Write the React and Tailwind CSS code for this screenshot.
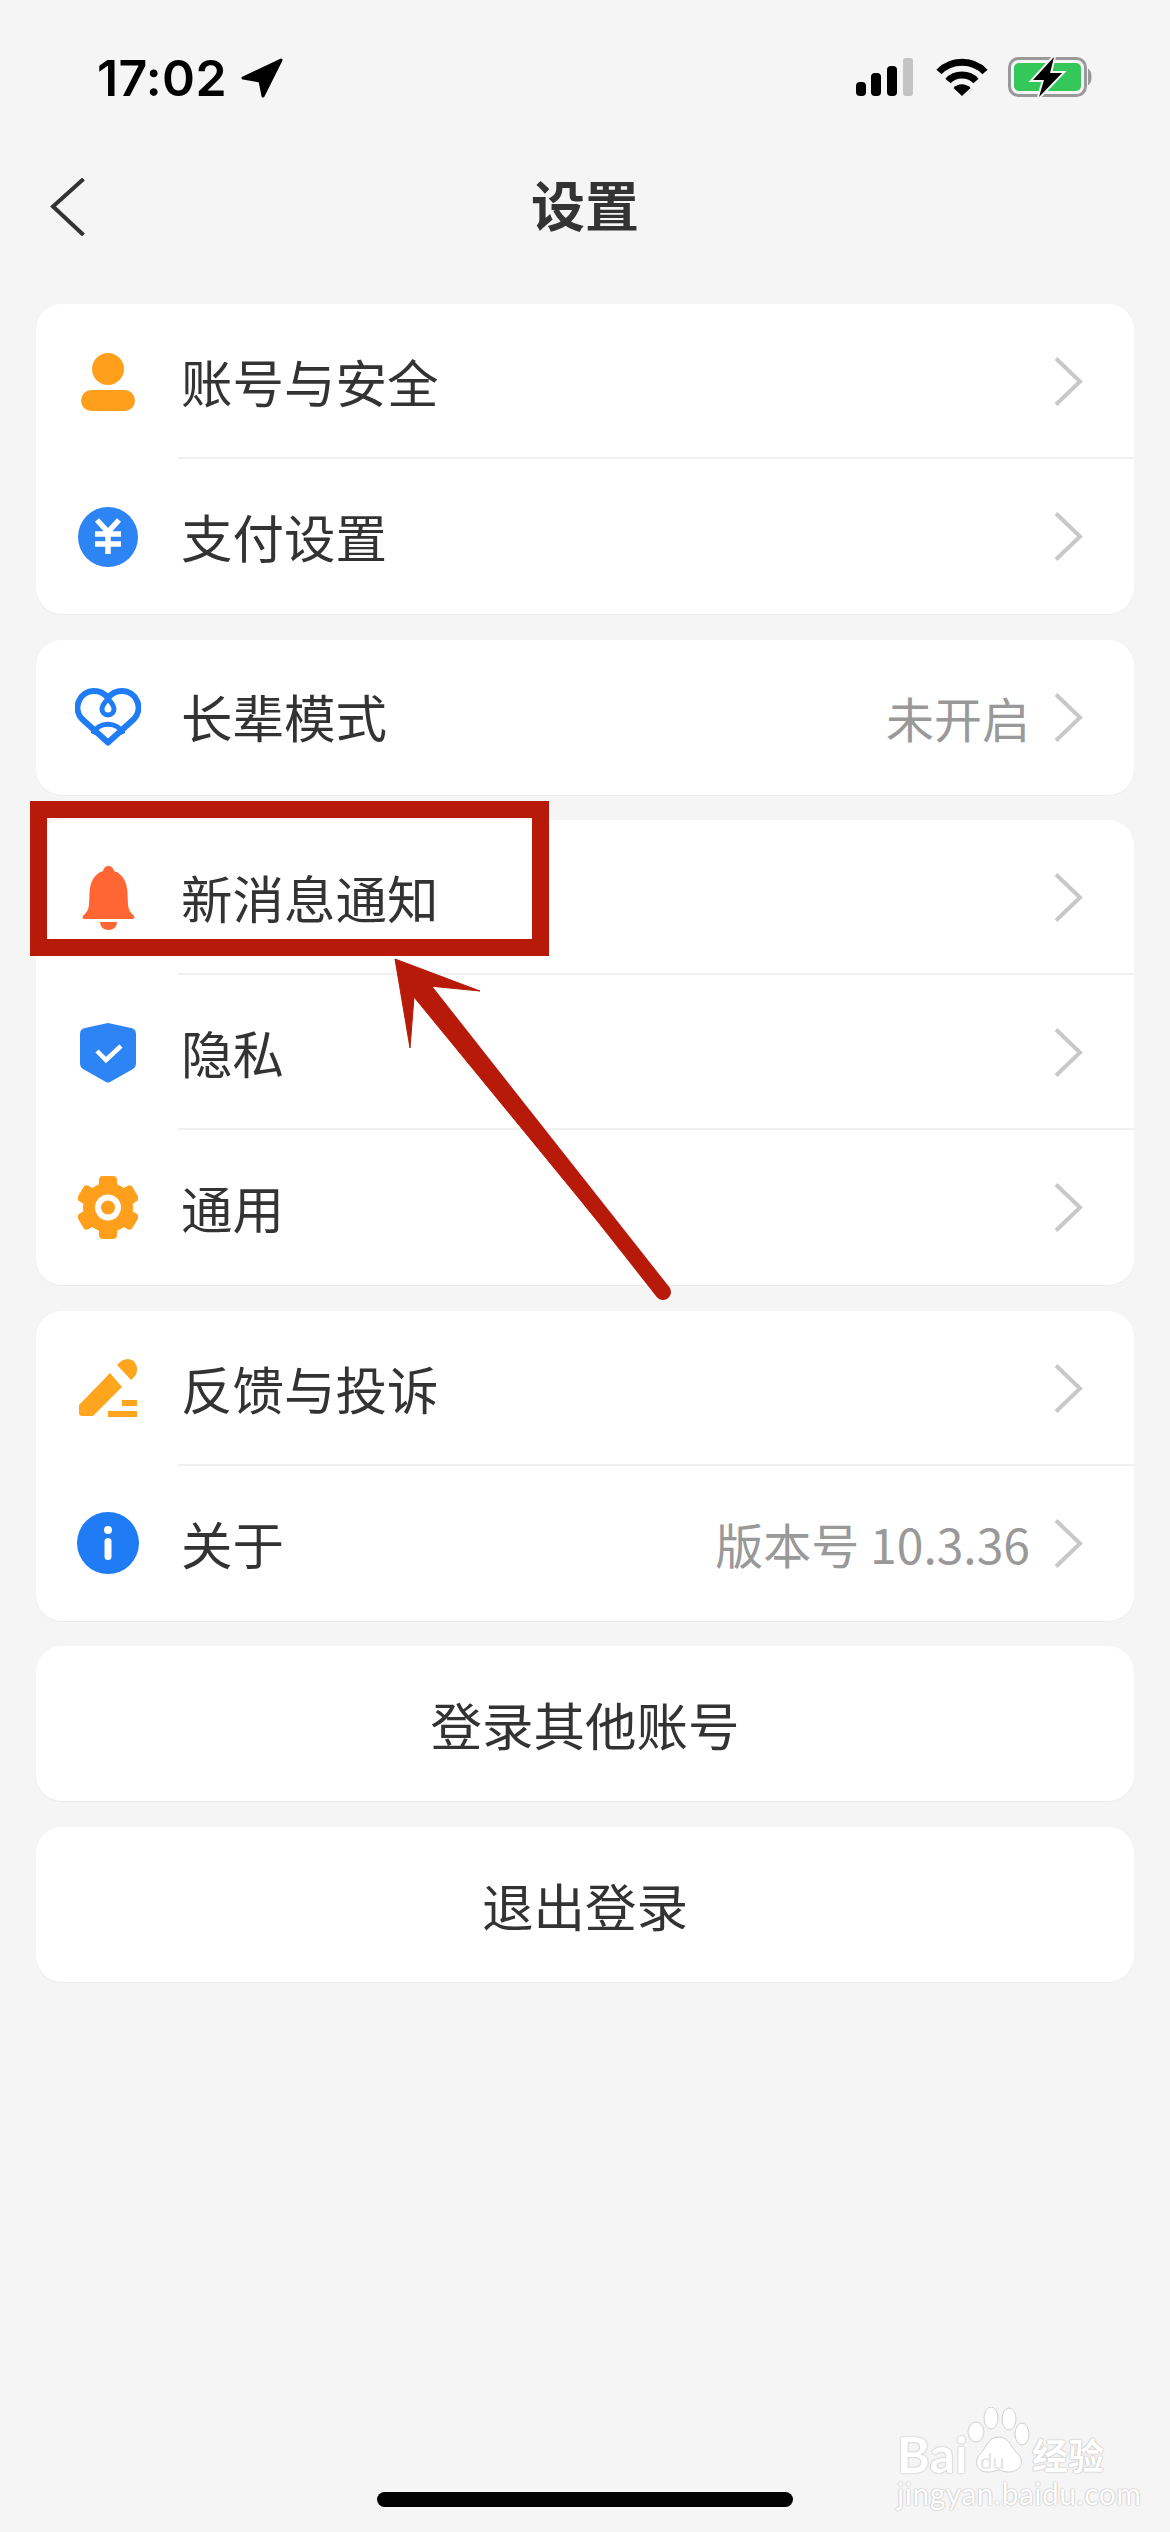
import React from 'react';

const CJK = '[font-family:"Noto_Sans_CJK_SC","Noto_Sans",sans-serif]';

const PersonIcon = () => (
    <svg width="54" height="58" viewBox="0 0 54 58">
        <circle cx="27" cy="16" r="16" fill="#ff9f1c" />
        <rect x="0" y="37" width="54" height="21" rx="10.5" fill="#ff9f1c" />
    </svg>
);

const YenIcon = () => (
    <svg width="60" height="60" viewBox="0 0 60 60">
        <circle cx="30" cy="30" r="30" fill="#2d84f5" />
        <path d="M19 13 L30 25 L41 13 M30 25 V47 M17 27 H43 M17 37 H43" fill="none" stroke="#fff" strokeWidth="5.5" />
    </svg>
);

const HeartIcon = () => (
    <svg width="66" height="58" viewBox="0 0 66 58">
        <path d="M33 54.500 L7 31 C-3 20 5 3 19 3 C25 3 30 6 33 10 C36 6 41 3 47 3 C61 3 69 20 59 31 Z" fill="none" stroke="#1f7cf5" strokeWidth="6" strokeLinejoin="round" />
        <path d="M33 11 C36 14 39 17 39 21 A6 6 0 0 1 27 21 C27 17 30 14 33 11 Z" fill="none" stroke="#1f7cf5" strokeWidth="5" />
        <path d="M18 46 C23 33 43 33 48 46" fill="none" stroke="#1f7cf5" strokeWidth="5" />
    </svg>
);

const BellIcon = () => (
    <svg width="53" height="64" viewBox="0 0 53 64">
        <path d="M26.5 0 C29.5 0 31.5 2 32 5 C41 8 45 16 45.500 27 L46 39 C46.500 44 49 47 51 49 C53 50.500 53 53 50 53 H3 C0 53 0 50.500 2 49 C4 47 6.500 44 7 39 L7.500 27 C8 16 12 8 21 5 C21.500 2 23.500 0 26.500 0 Z" fill="#ff6633" />
        <path d="M18 56 H35 C35 61 31 64 26.500 64 C22 64 18 61 18 56 Z" fill="#ff6633" />
    </svg>
);

const ShieldIcon = () => (
    <svg width="56" height="60" viewBox="0 0 56 60">
        <path d="M28 0 L51 5 Q56 6 56 11 V40 Q56 44 53 46 L30 59 Q28 60 26 59 L3 46 Q0 44 0 40 V11 Q0 6 5 5 Z" fill="#2d84f5" />
        <path d="M17 28 L26 37 L41 23" fill="none" stroke="#fff" strokeWidth="4.5" />
    </svg>
);

const GearIcon = () => (
    <svg width="60" height="63" viewBox="0 0 60 63">
        <g fill="#ff9f1c">
            <circle cx="30" cy="31.500" r="25" />
            {[0, 60, 120, 180, 240, 300].map(a => (
                <rect key={a} x="21" y="0" width="18" height="14" rx="4" transform={`rotate(${a} 30 31.500)`} />
            ))}
        </g>
        <circle cx="30" cy="31.500" r="10" fill="none" stroke="#fff" strokeWidth="6" />
    </svg>
);

const PenIcon = () => (
    <svg width="58" height="58" viewBox="0 0 58 58">
        <path d="M0 46 L31 14 L43 28 L14 57 L3 57 Q0 57 0 54 Z" fill="#ffa61e" />
        <path d="M38 6 Q43 0 49 0 Q58 1 58 11 Q58 16 52 21 Z" fill="#ffa61e" />
        <rect x="43" y="41" width="15" height="6" fill="#ffa61e" />
        <rect x="29" y="52" width="29" height="6" fill="#ffa61e" />
    </svg>
);

const InfoIcon = () => (
    <svg width="62" height="62" viewBox="0 0 62 62">
        <circle cx="31" cy="31" r="31" fill="#1f7cf5" />
        <circle cx="31" cy="18" r="4" fill="#fff" />
        <rect x="27.500" y="26" width="7" height="22" rx="3.500" fill="#fff" />
    </svg>
);

const Chevron = () => (
    <svg width="29" height="49" viewBox="0 0 29 49" className="shrink-0">
        <path d="M2 1.500 L26 24.500 L2 47.500" fill="none" stroke="#c8c8c8" strokeWidth="4" />
    </svg>
);

const Row = ({ icon, label, value, divider }) => (
    <div className="relative flex h-[155px] items-center pl-[36px] pr-[51px]">
        <div className="flex w-[72px] shrink-0 items-center justify-center">{icon}</div>
        <span className="ml-[37px] pb-[2px] text-[51.500px] leading-none text-[#333]">{label}</span>
        <div className="ml-auto flex items-center">
            {value && <span className="mr-[24px] text-[48px] leading-none text-[#999]">{value}</span>}
            <Chevron />
        </div>
        {divider && <div className="absolute bottom-0 left-[142px] right-0 h-[2px] bg-[#f0f0f0]" />}
    </div>
);

const Card = ({ children }) => (
    <div className="overflow-hidden rounded-[26px] bg-white shadow-[0_1px_1px_#ececec]">{children}</div>
);

const Button = ({ label }) => (
    <div className="flex h-[155px] items-center justify-center rounded-[26px] bg-white text-[51.500px] leading-none text-[#333] shadow-[0_1px_1px_#ececec]">
        {label}
    </div>
);

const StatusBar = () => (
    <div className="flex h-[150px] items-start justify-between pl-[97px] pr-[78px] pt-[58px]">
        <div className="flex items-center">
            <span className="text-[50px] font-semibold leading-[40px] tracking-[0.300px] text-black [font-family:Inter,sans-serif]">17:02</span>
            <svg width="42" height="40" viewBox="0 0 42 40" className="ml-[14px]">
                <path d="M40 2 L2 20 L19 23 L22 38 Z" fill="#000" stroke="#000" strokeWidth="3" strokeLinejoin="round" />
            </svg>
        </div>
        <div className="flex items-start">
            <svg width="57" height="38" viewBox="0 0 57 38">
                <rect x="0" y="24" width="10" height="14" rx="4" fill="#000" />
                <rect x="15" y="15" width="10" height="23" rx="4" fill="#000" />
                <rect x="31" y="8" width="10" height="30" rx="4" fill="#000" />
                <rect x="47" y="0" width="10" height="38" rx="3" fill="#c4c4c4" />
            </svg>
            <svg width="52" height="38" viewBox="0 0 52 38" className="ml-[23px]">
                <path d="M3 14 C15 1 37 1 49 14" fill="none" stroke="#000" strokeWidth="7" />
                <path d="M12 23 C19 15 33 15 40 23" fill="none" stroke="#000" strokeWidth="7" />
                <path d="M26 38 L17.500 30 C22 25 30 25 34.500 30 Z" fill="#000" />
            </svg>
            <svg width="84" height="40" viewBox="0 0 84 40" className="ml-[20px] -mt-px">
                <rect x="1.500" y="1.500" width="76" height="37" rx="9" fill="none" stroke="#999" strokeWidth="3" />
                <rect x="6" y="6" width="67" height="28" rx="5" fill="#34c759" />
                <path d="M81 14 C83 16 83 24 81 26 Z" fill="#999" stroke="#999" strokeWidth="2" />
                <path d="M46 0 L25 23 H36 L31 40 L54 16 H42 Z" fill="#000" stroke="#f5f5f5" strokeWidth="4" strokeLinejoin="miter" paintOrder="stroke" />
            </svg>
        </div>
    </div>
);

const Watermark = () => (
    <div className="absolute left-[897px] top-[2407px] h-[100px] w-[212px] text-white [text-shadow:0_0_2px_#b8b8b8,0_0_1px_#b8b8b8]">
        <span className="absolute left-0 top-[27px] text-[50px] font-bold leading-[40px] [font-family:Lato,sans-serif]">Bai</span>
        <svg width="64" height="66" viewBox="0 0 64 66" className="absolute left-[70px] top-0">
            <g fill="#fff" stroke="#d0d0d0" strokeWidth="1">
                <ellipse cx="9" cy="25" rx="8" ry="10" />
                <ellipse cx="24" cy="11" rx="7" ry="11" />
                <ellipse cx="42" cy="12" rx="7" ry="11" />
                <ellipse cx="55" cy="27" rx="7" ry="11" />
                <path d="M32 30 C43 30 44 42 52 48 C58 56 52 65 42 65 C36 65 34 63 32 63 C29 63 27 65 21 65 C10 65 6 56 13 47 C20 41 20 30 32 30 Z" />
            </g>
        </svg>
        <span className="absolute left-[83px] top-[43px] text-[22px] leading-none text-[#e4e4e4] [font-family:Lato,sans-serif] [text-shadow:none]">du</span>
        <span className={`absolute left-[135px] top-[27px] text-[36px] font-bold leading-[40px] ${CJK}`}>经验</span>
        <span className="absolute left-0 top-[71px] text-[30px] leading-[30px] tracking-[0.500px] [font-family:Lato,sans-serif]">jingyan.baidu.com</span>
    </div>
);

// red note drawn over the screenshot
const Annotation = () => (
    <>
        <div className="absolute left-[30px] top-[801px] h-[155px] w-[519px] border-[17px] border-[#b81a0a]" />
        <svg width="1170" height="400" viewBox="0 900 1170 400" className="absolute left-0 top-[900px]">
            <path d="M395 959 L480 991 L429 986 L667 1288 L659 1296 L414 997 L410 1048 Z" fill="#b81a0a" stroke="#b81a0a" strokeWidth="1" />
            <path d="M425 990 L663 1292" stroke="#b81a0a" strokeWidth="16" strokeLinecap="round" />
        </svg>
    </>
);

export default function App() {
    return (
        <div className={`relative flex min-h-[2532px] w-[1170px] flex-col overflow-hidden bg-[#f5f5f5] ${CJK}`}>
            <StatusBar />

            <div className="relative mb-[40px] flex h-[114px] items-center justify-center">
                <svg width="36" height="58" viewBox="0 0 36 58" className="absolute left-[50px] top-[28px]">
                    <path d="M33.500 1 L3 28.500 L33.500 57" fill="none" stroke="#333" strokeWidth="4" />
                </svg>
                <span className="pb-[6px] text-[54px] font-bold leading-none text-[#333]">设置</span>
            </div>

            <div className="flex flex-col gap-[25.600px] px-[36px]">
                <Card>
                    <Row icon={<PersonIcon />} label="账号与安全" divider />
                    <Row icon={<YenIcon />} label="支付设置" />
                </Card>
                <Card>
                    <Row icon={<HeartIcon />} label="长辈模式" value="未开启" />
                </Card>
                <Card>
                    <Row icon={<BellIcon />} label="新消息通知" divider />
                    <Row icon={<ShieldIcon />} label="隐私" divider />
                    <Row icon={<GearIcon />} label="通用" />
                </Card>
                <Card>
                    <Row icon={<PenIcon />} label="反馈与投诉" divider />
                    <Row icon={<InfoIcon />} label="关于" value="版本号 10.3.36" />
                </Card>
                <Button label="登录其他账号" />
                <Button label="退出登录" />
            </div>

            <div className="mt-auto mb-[25px] h-[15px] w-[416px] self-center rounded-full bg-black" />

            <Annotation />
            <Watermark />
        </div>
    );
}
